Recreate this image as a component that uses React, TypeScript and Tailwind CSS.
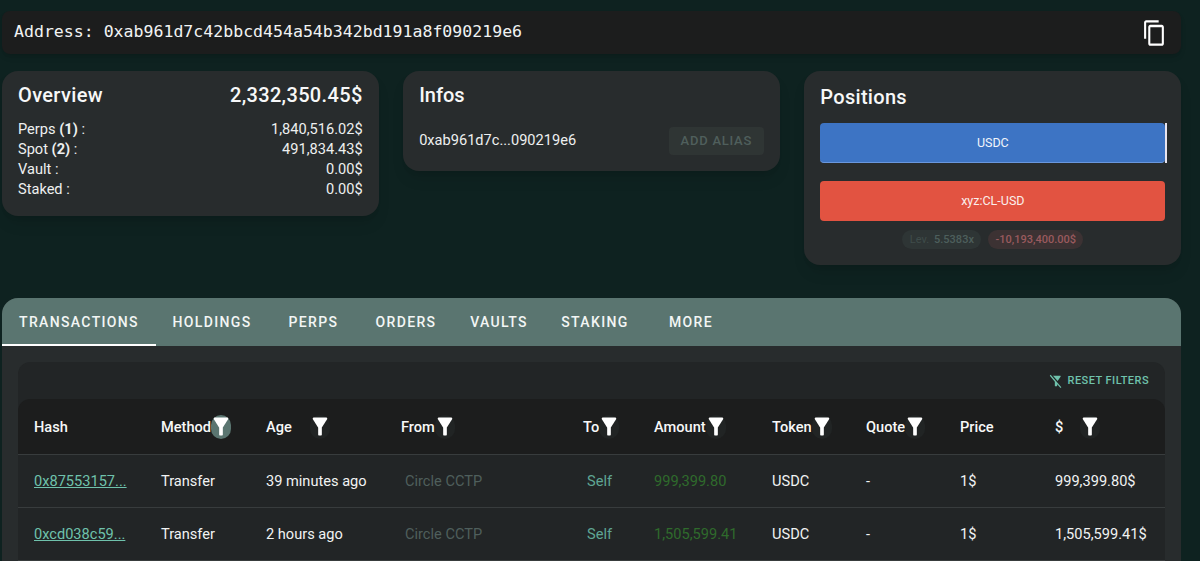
import React from 'react';

const filterPath = 'M4.25 5.61C6.27 8.2 10 13 10 13v6c0 .55.45 1 1 1h2c.55 0 1-.45 1-1v-6s3.72-4.8 5.74-7.39c.51-.66.04-1.61-.79-1.61H5.04c-.83 0-1.3.95-.79 1.61z';
const filterOffPath = 'M19.79 5.61C20.3 4.95 19.83 4 19 4H6.83l7.97 7.97 4.99-6.36zM2.81 2.81 1.39 4.22 10 13v6c0 .55.45 1 1 1h2c.55 0 1-.45 1-1v-2.17l5.78 5.78 1.41-1.41L2.81 2.81z';
const copyPath = 'M16 1H4c-1.1 0-2 .9-2 2v14h2V3h12V1zm3 4H8c-1.1 0-2 .9-2 2v14c0 1.1.9 2 2 2h11c1.1 0 2-.9 2-2V7c0-1.1-.9-2-2-2zm0 16H8V7h11v14z';

const gridCols = 'grid grid-cols-[127px_105px_135px_182px_71px_118px_94px_94px_95px_1fr] px-4 items-center';

function FilterButton({ active }: { active?: boolean }) {
  return (
    <span className={`w-[20px] h-[24px] rounded-full flex items-center justify-center flex-shrink-0 ${active ? 'bg-[#5a7570]' : 'bg-[#212424]'}`}>
      <svg className="w-[22px] h-[27px] flex-shrink-0 text-white" viewBox="0 0 24 24" fill="currentColor" preserveAspectRatio="none">
        <path d={filterPath} />
      </svg>
    </span>
  );
}

function HeadCell({ label, filter, active, gap }: { label: string; filter?: boolean; active?: boolean; gap?: string }) {
  return (
    <div className={`flex items-center ${gap ?? 'gap-0'}`}>
      <span className="pt-[2px]">{label}</span>
      {filter && <FilterButton active={active} />}
    </div>
  );
}

function Row({ hash, method, age, amount, usd }: { hash: string; method: string; age: string; amount: string; usd: string }) {
  return (
    <div className={`${gridCols} h-[53px] pt-px border-b border-[#383c3d] text-[14.6px] text-[#f1f3f3]`}>
      <a className="text-[#6fc2ac] underline">{hash}</a>
      <span>{method}</span>
      <span>{age}</span>
      <span className="pl-1 text-[#4f5f5c]">Circle CCTP</span>
      <span className="pl-1 text-[#5fa594]">Self</span>
      <span className="text-[#2f6b2c]">{amount}</span>
      <span>USDC</span>
      <span>-</span>
      <span>1$</span>
      <span>{usd}</span>
    </div>
  );
}

function StatRow({ label, count, value }: { label: string; count?: number; value: string }) {
  return (
    <div className="flex justify-between h-[20px] items-center text-[14.6px] text-[#eef0f0]">
      <span>
        {label} {count !== undefined && <b className="font-bold">({count})</b>} :
      </span>
      <span>{value}</span>
    </div>
  );
}

const tabs = [
  { label: 'TRANSACTIONS', width: 'w-[154px]' },
  { label: 'HOLDINGS', width: 'w-[112px]' },
  { label: 'PERPS', width: 'w-[91px]' },
  { label: 'ORDERS', width: 'w-[94px]' },
  { label: 'VAULTS', width: 'w-[92px]' },
  { label: 'STAKING', width: 'w-[100px]' },
  { label: 'MORE', width: 'w-[92px]' },
];

export default function App() {
  return (
    <div className="h-screen overflow-hidden bg-[#0e2220] pl-[2px] pr-[19px] pt-[11px] font-['Roboto',sans-serif]">
      <div className="h-[43px] rounded-lg bg-[#1c1d1d] pl-3 pr-[14px] flex items-center justify-between shadow-md">
        <span className="font-['DejaVu_Sans_Mono',monospace] text-[16.56px] text-[#f1f3f3]">
          Address: 0xab961d7c42bbcd454a54b342bd191a8f090219e6
        </span>
        <svg className="w-[25px] h-[28px] text-white" viewBox="0 0 24 24" fill="currentColor" preserveAspectRatio="none">
          <path d={copyPath} />
        </svg>
      </div>

      <div className="mt-[17px] grid grid-cols-3 gap-[24.5px] items-start">
        <div className="h-[145px] rounded-2xl bg-[#282c2d] px-4 pt-[10px] shadow-lg">
          <div className="flex justify-between items-center text-[20px] font-medium tracking-[0.35px] text-[#f7f8f8] h-[28px]">
            <span>Overview</span>
            <span>2,332,350.45$</span>
          </div>
          <div className="mt-[11px]">
            <StatRow label="Perps" count={1} value="1,840,516.02$" />
            <StatRow label="Spot" count={2} value="491,834.43$" />
            <StatRow label="Vault" value="0.00$" />
            <StatRow label="Staked" value="0.00$" />
          </div>
        </div>

        <div className="h-[100px] rounded-2xl bg-[#282c2d] px-4 pt-[10px] shadow-lg">
          <div className="text-[20px] font-medium text-[#f7f8f8] h-[28px] flex items-center">Infos</div>
          <div className="mt-[18px] flex items-center justify-between">
            <span className="text-[14.6px] text-[#eef0f0]">0xab961d7c...090219e6</span>
            <button className="w-[95px] h-[28px] rounded bg-[#2f3534] text-[13px] font-medium tracking-[0.75px] text-[#4f5f5c]">ADD ALIAS</button>
          </div>
        </div>

        <div className="h-[194px] rounded-2xl bg-[#282c2d] px-4 pt-[12px] shadow-lg">
          <div className="text-[20px] font-medium text-[#f7f8f8] h-[28px] flex items-center tracking-[0.3px]">Positions</div>
          <div className="mt-[12px] flex h-[40px] w-[347px]">
            <div className="flex-1 rounded-sm bg-[#3d74c4] border-b border-[#6a97dc] flex items-center justify-center pt-px text-[12.5px] text-[#f1f5fb]">USDC</div>
            <div className="w-[2px] bg-[#e8e4ee]" />
          </div>
          <div className="mt-[18px] h-[40px] w-[345px] rounded-sm bg-[#e25341] flex items-center justify-center text-[12.5px] text-[#fbeeec]">xyz:CL-USD</div>
          <div className="mt-[9px] w-[345px] flex justify-center gap-[7px] text-[11px] font-medium">
            <span className="h-[19px] w-[79px] rounded-full bg-[#2e3535] flex items-center justify-center gap-[5px] pt-px text-[#4d5f5c]">
              <span className="font-normal text-[#3f4c4a]">Lev.</span> 5.5383x
            </span>
            <span className="h-[19px] w-[95px] rounded-full bg-[#3c3233] flex items-center justify-center pt-px text-[#9a5a5e]">-10,193,400.00$</span>
          </div>
        </div>
      </div>

      <div className="mt-[33px] rounded-t-2xl bg-[#282c2d] pb-4">
        <div className="h-[48px] rounded-t-2xl bg-[#5a7570] flex">
          {tabs.map((tab, i) => (
            <div
              key={tab.label}
              className={`${tab.width} flex items-center justify-center pt-[2px] text-[14px] font-medium tracking-[1.35px] text-[#f3f6f5] border-b-2 ${i === 0 ? 'border-white' : 'border-transparent'}`}
            >
              {tab.label}
            </div>
          ))}
        </div>

        <div className="mx-4 mt-4 rounded-t-xl bg-[#222526]">
          <div className="h-[37px] pt-px flex items-center justify-end gap-[5px] pr-4 text-[#6fc2ac] text-[11px] font-medium tracking-[0.45px]">
            <svg className="w-[14px] h-[16px]" viewBox="0 0 24 24" fill="currentColor" preserveAspectRatio="none">
              <path d={filterOffPath} />
            </svg>
            RESET FILTERS
          </div>
          <div className={`${gridCols} h-[56px] rounded-t-xl bg-[#1c1d1d] border-b border-[#383c3d] text-[14.6px] font-medium text-[#f7f8f8]`}>
            <HeadCell label="Hash" />
            <HeadCell label="Method" filter active />
            <HeadCell label="Age" filter gap="gap-[18px]" />
            <HeadCell label="From" filter />
            <HeadCell label="To" filter />
            <HeadCell label="Amount" filter />
            <HeadCell label="Token" filter />
            <HeadCell label="Quote" filter />
            <HeadCell label="Price" />
            <HeadCell label="$" filter gap="gap-[17px]" />
          </div>
          <Row hash="0x87553157..." method="Transfer" age="39 minutes ago" amount="999,399.80" usd="999,399.80$" />
          <Row hash="0xcd038c59..." method="Transfer" age="2 hours ago" amount="1,505,599.41" usd="1,505,599.41$" />
        </div>
      </div>
    </div>
  );
}
